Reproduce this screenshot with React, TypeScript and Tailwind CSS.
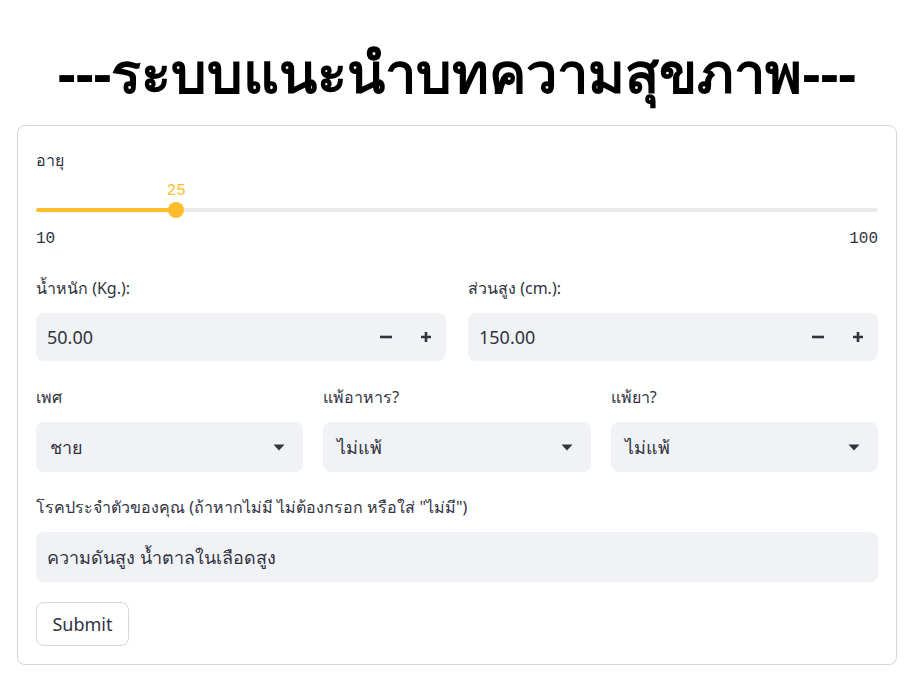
import { useState } from "react";

const ui = { fontFamily: '"Source Sans Pro", "Noto Sans", "Open Sans", sans-serif' };
const mono = { fontFamily: '"Liberation Mono", "DejaVu Sans Mono", monospace' };

function Caret() {
  return (
    <svg width="12" height="7" viewBox="0 0 12 7" className="shrink-0">
      <path d="M0.5 0.5h11L6 6.5z" fill="#31333f" />
    </svg>
  );
}

function NumberBox({ value }: { value: string }) {
  return (
    <div className="flex h-[48px] items-center rounded-lg bg-[#f0f2f6] pl-[11px] pr-[13px]">
      <span className="flex-1 text-[18px] text-[#31333f]">{value}</span>
      <svg width="14" height="14" viewBox="0 0 14 14" className="mr-[26px]">
        <path d="M1 7h12" stroke="#31333f" strokeWidth="2.6" />
      </svg>
      <svg width="14" height="14" viewBox="0 0 14 14">
        <path d="M2 7h10M7 2v10" stroke="#31333f" strokeWidth="2.6" />
      </svg>
    </div>
  );
}

function Select({ label, value }: { label: string; value: string }) {
  return (
    <div className="flex-1">
      <p className="mb-[15px] h-[20px] text-[16px] leading-[20px] text-[#31333f]">{label}</p>
      <div className="flex h-[50px] items-center rounded-lg bg-[#f0f2f6] pl-[14px] pr-[18px]">
        <span className="flex-1 text-[18px] text-[#31333f]">{value}</span>
        <Caret />
      </div>
    </div>
  );
}

export default function App() {
  const [age] = useState(25);
  const pct = ((age - 10) / 90) * 100;

  return (
    <div className="min-h-[681px] bg-white pl-[17px] pr-[20px] pt-[36px]" style={ui}>
      <h1 className="mb-[19px] h-[70px] text-center text-[56px] font-bold leading-[70px] text-black">
        ---ระบบแนะนำบทความสุขภาพ---
      </h1>

      <div className="rounded-lg border border-[#d6d6d9] px-[18px] pb-[18px] pt-[24px]">
        <p className="h-[20px] text-[16px] leading-[20px] text-[#31333f]">อายุ</p>
        <div className="relative mt-[10px] h-[44px]">
          <div className="absolute left-0 right-0 top-[28px] h-[4px] rounded-full bg-[#eaeaea]" />
          <div className="absolute left-0 top-[28px] h-[4px] rounded-full bg-[#ffbd2e]" style={{ width: `${pct}%` }} />
          <div className="absolute top-[22px] h-[16px] w-[16px] -translate-x-1/2 rounded-full bg-[#ffbd2e]" style={{ left: `${pct}%` }} />
          <span className="absolute top-[1px] -translate-x-1/2 text-[16px] leading-[20px] text-[#ffbd2e]" style={{ left: `${pct}%`, ...mono }}>
            {age}
          </span>
        </div>
        <div className="mt-[5px] flex justify-between text-[16px] leading-[20px] text-[#31333f]" style={mono}>
          <span>10</span>
          <span>100</span>
        </div>

        <div className="mt-[29px] flex gap-[22px]">
          <div className="flex-1">
            <p className="mb-[15px] h-[20px] text-[16px] leading-[20px] text-[#31333f]">น้ำหนัก (Kg.):</p>
            <NumberBox value="50.00" />
          </div>
          <div className="flex-1">
            <p className="mb-[15px] h-[20px] text-[16px] leading-[20px] text-[#31333f]">ส่วนสูง (cm.):</p>
            <NumberBox value="150.00" />
          </div>
        </div>

        <div className="mt-[26px] flex gap-[20px]">
          <Select label="เพศ" value="ชาย" />
          <Select label="แพ้อาหาร?" value="ไม่แพ้" />
          <Select label="แพ้ยา?" value="ไม่แพ้" />
        </div>

        <p className="mt-[25px] mb-[15px] h-[20px] text-[16px] leading-[20px] text-[#31333f]">
          โรคประจำตัวของคุณ (ถ้าหากไม่มี ไม่ต้องกรอก หรือใส่ "ไม่มี")
        </p>
        <div className="flex h-[50px] items-center rounded-lg bg-[#f0f2f6] px-[11px] text-[18px] text-[#31333f]">
          ความดันสูง น้ำตาลในเลือดสูง
        </div>

        <button className="mt-[20px] h-[44px] w-[93px] rounded-lg border border-[#d6d6d9] bg-white text-[18px] text-[#31333f]">
          Submit
        </button>
      </div>
    </div>
  );
}
